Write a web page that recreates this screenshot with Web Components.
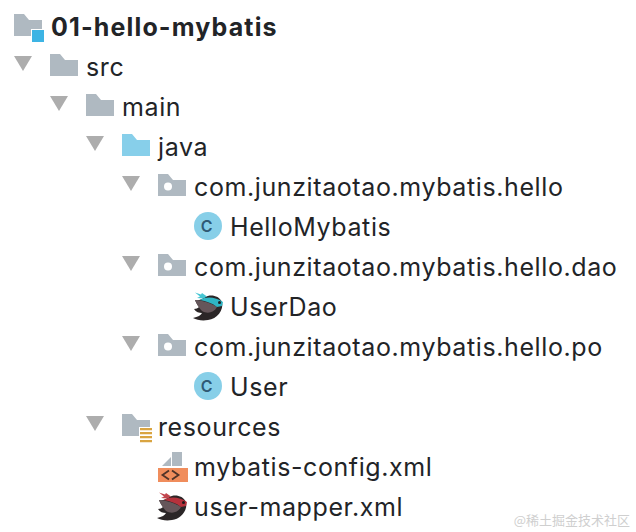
<!DOCTYPE html>
<html>
<head>
<meta charset="utf-8">
<title>project tree</title>
<style>
  html, body { margin: 0; background: #fff; }
  body { font-family: Inter, "Liberation Sans", sans-serif; color: #222427; }
</style>
</head>
<body>
<project-tree>
  <tree-row bold><folder-icon slot="icon" badge="module"></folder-icon>01-hello-mybatis</tree-row>
  <tree-row arrow><folder-icon slot="icon"></folder-icon>src</tree-row>
  <tree-row depth="1" arrow><folder-icon slot="icon"></folder-icon>main</tree-row>
  <tree-row depth="2" arrow><folder-icon slot="icon" color="#87cfea"></folder-icon>java</tree-row>
  <tree-row depth="3" arrow><folder-icon slot="icon" badge="dot"></folder-icon>com.junzitaotao.mybatis.hello</tree-row>
  <tree-row depth="5"><class-icon slot="icon"></class-icon>HelloMybatis</tree-row>
  <tree-row depth="3" arrow><folder-icon slot="icon" badge="dot"></folder-icon>com.junzitaotao.mybatis.hello.dao</tree-row>
  <tree-row depth="5"><bird-icon slot="icon" band="#2fb5c4" tie="#45c6d3"></bird-icon>UserDao</tree-row>
  <tree-row depth="3" arrow><folder-icon slot="icon" badge="dot"></folder-icon>com.junzitaotao.mybatis.hello.po</tree-row>
  <tree-row depth="5"><class-icon slot="icon"></class-icon>User</tree-row>
  <tree-row depth="2" arrow><folder-icon slot="icon" badge="lines"></folder-icon>resources</tree-row>
  <tree-row depth="4"><xml-icon slot="icon"></xml-icon>mybatis-config.xml</tree-row>
  <tree-row depth="4"><bird-icon slot="icon" band="#b5323c" tie="#c2454d"></bird-icon>user-mapper.xml</tree-row>
</project-tree>
<water-mark>@稀土掘金技术社区</water-mark>

<script>
class ProjectTree extends HTMLElement {
  constructor() {
    super();
    this.attachShadow({ mode: "open" });
    this.shadowRoot.innerHTML = `
      <style>
        :host { display: flex; flex-direction: column; padding-top: 7px; }
      </style>
      <slot></slot>
    `;
  }
}

class TreeRow extends HTMLElement {
  constructor() {
    super();
    this.attachShadow({ mode: "open" });
  }

  connectedCallback() {
    const depth = Number(this.getAttribute("depth") ?? 0);
    const arrow = this.hasAttribute("arrow");
    const bold = this.hasAttribute("bold");
    this.shadowRoot.innerHTML = `
      <style>
        :host {
          display: flex;
          align-items: center;
          height: 40px;
          padding-left: ${14 + depth * 36}px;
          font-size: 25px;
          letter-spacing: ${bold ? 1.15 : 0.6}px;
          white-space: nowrap;
          font-weight: ${bold ? 700 : 400};
        }
        .arrow { flex: none; width: 18px; height: 15px; margin: 0 18px 7px 0; }
        .icon { flex: none; display: flex; width: ${bold ? 37 : 36}px; }
      </style>
      ${arrow ? `<svg class="arrow" viewBox="0 0 18 15"><path d="M0 0H18L9 15Z" fill="#adadad"/></svg>` : ""}
      <span class="icon"><slot name="icon"></slot></span>
      <slot></slot>
    `;
  }
}

class FolderIcon extends HTMLElement {
  constructor() {
    super();
    this.attachShadow({ mode: "open" });
  }

  connectedCallback() {
    const color = this.getAttribute("color") ?? "#afb9c1";
    const badges = {
      module: `<path d="M17 15h14v14H17z" fill="#fff"/><path d="M18 16h12v12H18z" fill="#3db4e4"/>`,
      dot: `<circle cx="10" cy="12.6" r="4" fill="#fff"/>`,
      lines: `<path d="M17 13h14v16H17z" fill="#fff"/><path d="M18 14h12v2.2H18zM18 18h12v2.2H18zM18 22h12v2.2H18zM18 26h12v2.2H18z" fill="#d9a441"/>`
    };
    this.shadowRoot.innerHTML = `
      <style>
        :host { display: block; width: 30px; height: 30px; margin-top: 4px; }
        svg { display: block; overflow: visible; }
      </style>
      <svg width="30" height="30" viewBox="0 0 30 30">
        <path d="M0 0H10L15 6H28V22H0Z" fill="${color}"/>
        ${badges[this.getAttribute("badge")] ?? ""}
      </svg>
    `;
  }
}

class ClassIcon extends HTMLElement {
  constructor() {
    super();
    this.attachShadow({ mode: "open" });
  }

  connectedCallback() {
    this.shadowRoot.innerHTML = `
      <style>
        :host { display: block; width: 28px; height: 28px; margin-bottom: 2px; }
        svg { display: block; }
        text { font: 600 16px Inter, "Liberation Sans", sans-serif; fill: #2f5a75; }
      </style>
      <svg width="28" height="28" viewBox="0 0 28 28">
        <circle cx="14" cy="14" r="14" fill="#87cfe8"/>
        <text x="13" y="19.8" text-anchor="middle">C</text>
      </svg>
    `;
  }
}

class BirdIcon extends HTMLElement {
  constructor() {
    super();
    this.attachShadow({ mode: "open" });
  }

  connectedCallback() {
    const band = this.getAttribute("band");
    const tie = this.getAttribute("tie");
    this.shadowRoot.innerHTML = `
      <style>
        :host { display: block; width: 32px; height: 30px; margin-left: -2px; }
        svg { display: block; }
      </style>
      <svg width="32" height="30" viewBox="0 0 32 30">
        <path d="M1 26C6 25 9 23 10 21C7 21 4 20 2 17C4 17 6 16 7 15C5 13 4 10 3 8C7 9 10 7 13 5C18 2 27 3 30 10C32 18 25 27 16 28C10 29 5 28 1 26Z" fill="#2b2627"/>
        <path d="M3 8C9 8 19 11 25 15C22 21 15 22 10 19C7 16 4 11 3 8Z" fill="#65565a"/>
        <path d="M8 8C14 4 24 5 31 10L30 14L25 15C20 11 14 9 8 8Z" fill="${band}"/>
        <circle cx="27.5" cy="10.5" r="1.5" fill="#1d1a1b"/>
        <path d="M11 6.5L5 6L8 4.5L3 0.5L9 2.5L10 1L15 4.5Z" fill="${tie}"/>
      </svg>
    `;
  }
}

class XmlIcon extends HTMLElement {
  constructor() {
    super();
    this.attachShadow({ mode: "open" });
  }

  connectedCallback() {
    this.shadowRoot.innerHTML = `
      <style>
        :host { display: block; width: 30px; height: 30px; }
        svg { display: block; }
      </style>
      <svg width="30" height="30" viewBox="0 0 30 30">
        <path d="M14 0H24V14H14Z" fill="#afb9c1"/>
        <path d="M4 14L13 5V14Z" fill="#afb9c1"/>
        <path d="M0 16H30V30H0Z" fill="#f08d5c"/>
        <path d="M11 18.5L4.5 23L11 27.5M14 18.5L20.5 23L14 27.5" fill="none" stroke="#4f3328" stroke-width="1.8"/>
      </svg>
    `;
  }
}

class WaterMark extends HTMLElement {
  constructor() {
    super();
    this.attachShadow({ mode: "open" });
    this.shadowRoot.innerHTML = `
      <style>
        :host {
          position: absolute;
          right: 6px;
          bottom: 3px;
          font: 13px "Noto Sans CJK SC", sans-serif;
          color: #cfcfcf;
        }
      </style>
      <slot></slot>
    `;
  }
}

customElements.define("project-tree", ProjectTree);
customElements.define("tree-row", TreeRow);
customElements.define("folder-icon", FolderIcon);
customElements.define("class-icon", ClassIcon);
customElements.define("bird-icon", BirdIcon);
customElements.define("xml-icon", XmlIcon);
customElements.define("water-mark", WaterMark);
</script>
</body>
</html>
